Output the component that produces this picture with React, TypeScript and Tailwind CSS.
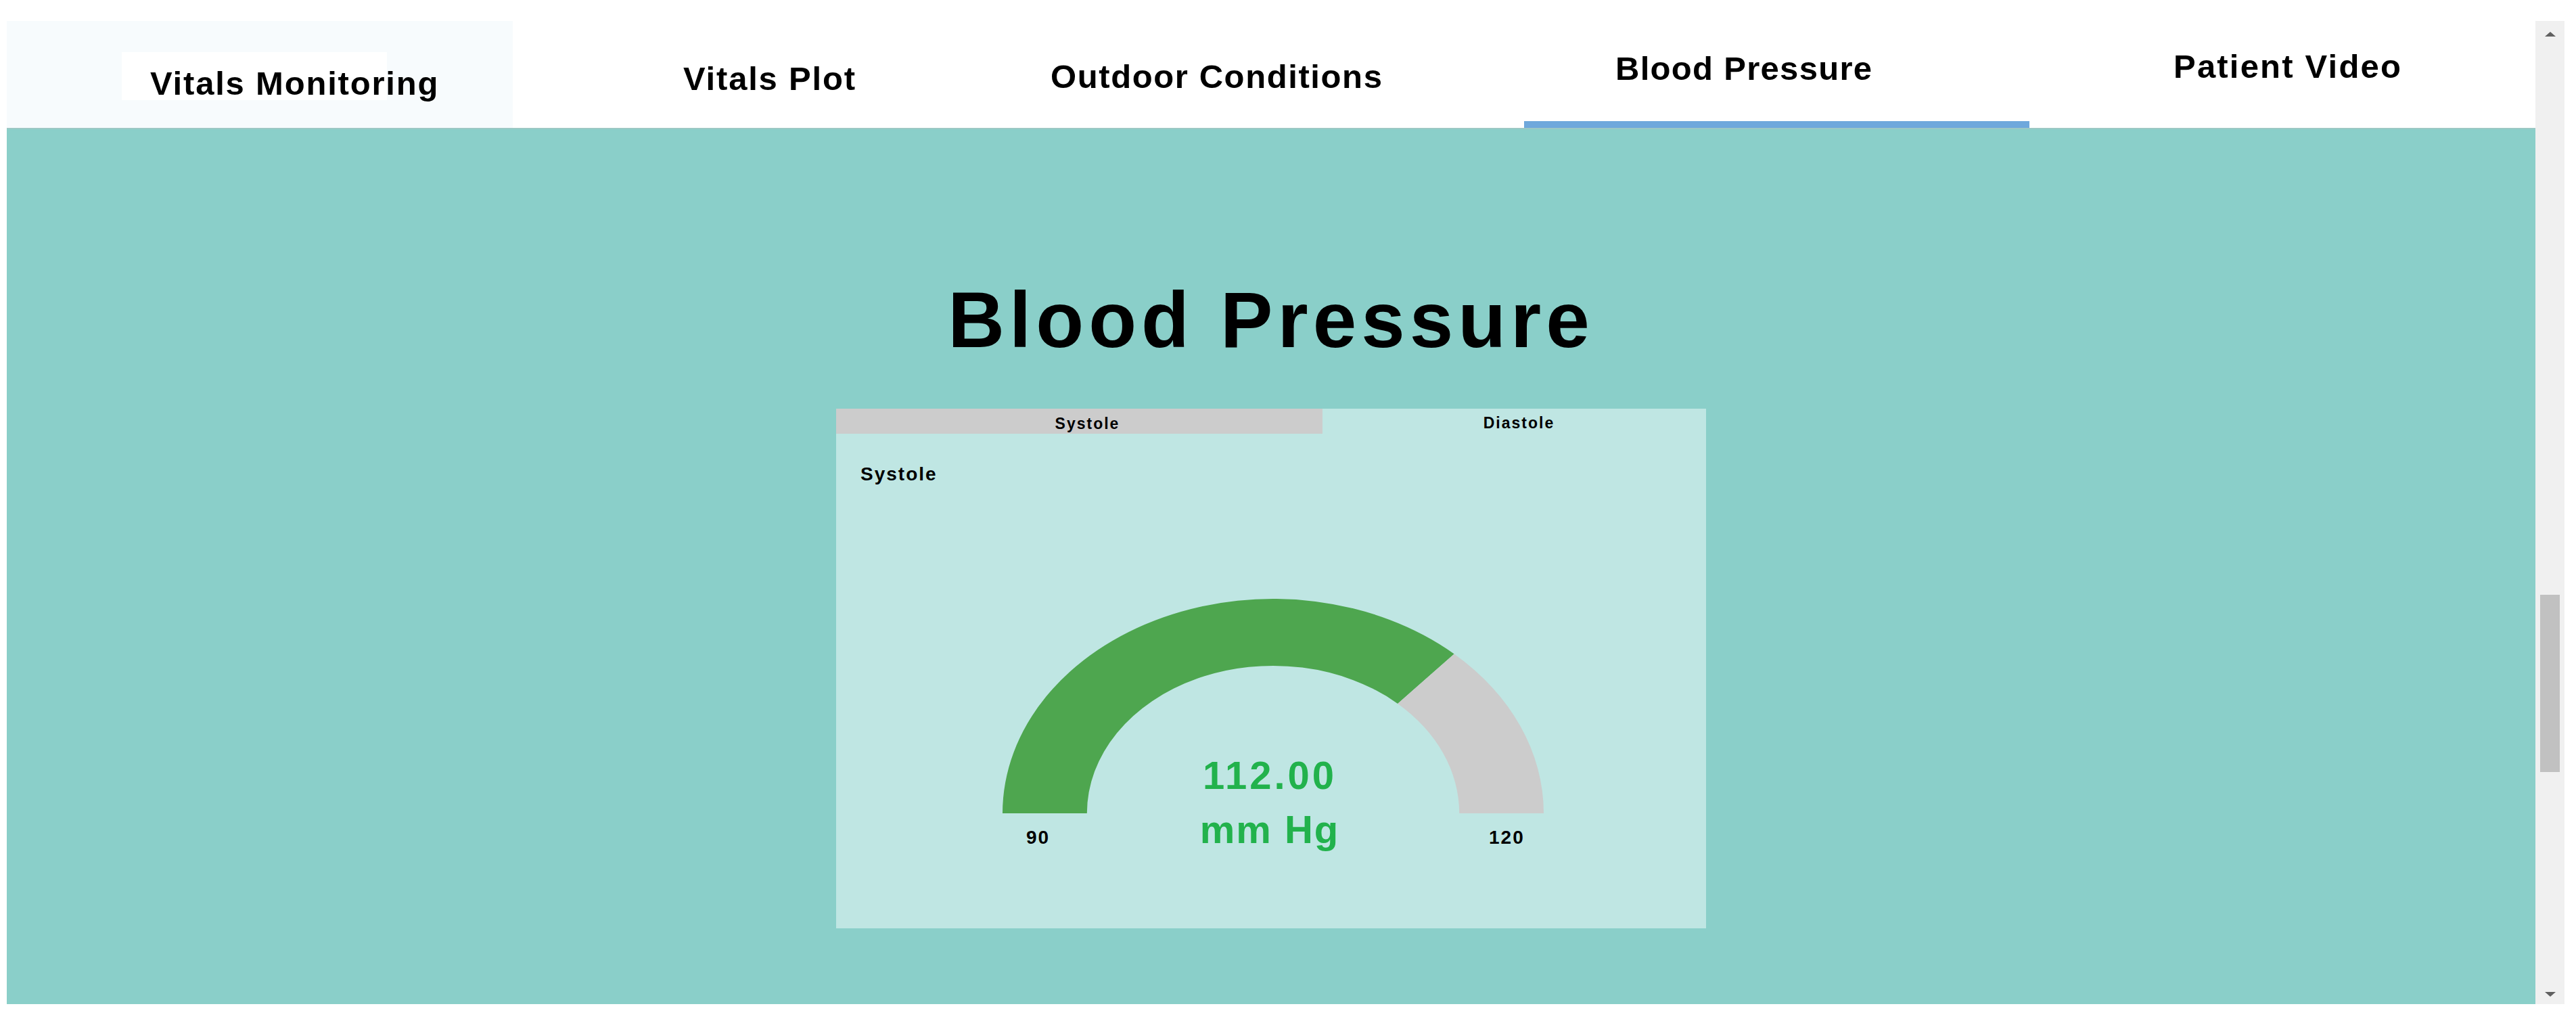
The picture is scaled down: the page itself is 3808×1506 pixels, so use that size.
import React from "react";

function Gauge() {
  const green = "M0 100 A100 100 0 0 1 166.91 25.69 L146.04 48.87 A68.8 68.8 0 0 0 31.2 100 Z";
  const gray = "M166.91 25.69 A100 100 0 0 1 200 100 L168.8 100 A68.8 68.8 0 0 0 146.04 48.87 Z";
  return (
    <div className="relative w-[800px]">
      <svg
        width="800"
        height="317"
        viewBox="0 0 200 100"
        preserveAspectRatio="none"
        className="block"
      >
        <path d={green} fill="#4ea64f" />
        <path d={gray} fill="#cccccc" />
      </svg>
      <div className="mt-[22px] flex text-[28px] leading-none text-black tracking-[2px]">
        <span className="w-[719px] pl-[35px]">90</span>
        <span>120</span>
      </div>
      <div className="absolute inset-x-0 top-[232px] flex flex-col items-center pr-[10px] text-[58px] leading-none text-[#22b24c]">
        <div className="tracking-[4px]">112.00</div>
        <div className="mt-[22px] tracking-[2px]">mm Hg</div>
      </div>
    </div>
  );
}

export default function App() {
  return (
    <div className="w-[3808px] h-[1506px] bg-white flex font-['Liberation_Sans',Arial,sans-serif] font-bold text-black overflow-hidden">
      <div className="w-[10px] shrink-0" />
      <div className="w-[3738px] shrink-0 flex flex-col">
        <header className="h-[189px] pt-[31px] flex">
          <div className="w-[748px] shrink-0 min-w-0 bg-[#f7fbfd]">
            <div className="ml-[170px] mt-[46px] w-[392px] h-[71px] bg-white pl-[42px] pt-[22px] whitespace-nowrap">
              <span className="text-[49px] leading-none tracking-[1.8px]">Vitals Monitoring</span>
            </div>
          </div>
          <div className="w-[747px] shrink-0 min-w-0 pl-[252px] pt-[61px] whitespace-nowrap">
            <span className="text-[49px] leading-none tracking-[1.8px]">Vitals Plot</span>
          </div>
          <div className="w-[748px] shrink-0 min-w-0 pl-[48px] pt-[58px] whitespace-nowrap">
            <span className="text-[49px] leading-none tracking-[1.6px]">Outdoor Conditions</span>
          </div>
          <div className="w-[747px] shrink-0 min-w-0 pl-[135px] pt-[46px] whitespace-nowrap border-b-[10px] border-[#6fa8dc]">
            <span className="text-[49px] leading-none tracking-[1.3px]">Blood Pressure</span>
          </div>
          <div className="w-[748px] shrink-0 min-w-0 pl-[213px] pt-[43px] whitespace-nowrap">
            <span className="text-[49px] leading-none tracking-[2.2px]">Patient Video</span>
          </div>
        </header>
        <main className="h-[1295px] bg-[#8acfc9] border-t-2 border-[#9cc8c4] flex flex-col items-center">
          <h1 className="mt-[224px] text-[116px] leading-none tracking-[7px]">Blood Pressure</h1>
          <div className="mt-[73px] w-[1286px] h-[768px] bg-[#bfe6e3] flex flex-col">
            <div className="h-[37px] flex text-[23px] leading-none tracking-[2px]">
              <div className="w-[719px] bg-[#cccccc] flex justify-center pt-[11px] pl-[24px]">Systole</div>
              <div className="flex-1 flex justify-center pt-[10px] pl-[14px]">Diastole</div>
            </div>
            <div className="pl-[36px] pt-[46px] flex flex-col">
              <div className="text-[28px] leading-none tracking-[2px]">Systole</div>
              <div className="ml-[210px] mt-[170px]">
                <Gauge />
              </div>
            </div>
          </div>
        </main>
      </div>
      <div className="w-[43px] shrink-0 mt-[31px] h-[1453px] bg-[#f0f0f0] flex flex-col items-center">
        <svg width="16" height="7" viewBox="0 0 16 7" className="mt-[16px]">
          <path d="M8 0 L16 7 L0 7 Z" fill="#606060" />
        </svg>
        <div className="mt-[825px] w-[29px] h-[262px] bg-[#c1c1c1]" />
        <svg width="16" height="7" viewBox="0 0 16 7" className="mt-[325px]">
          <path d="M0 0 L16 0 L8 7 Z" fill="#606060" />
        </svg>
      </div>
    </div>
  );
}
